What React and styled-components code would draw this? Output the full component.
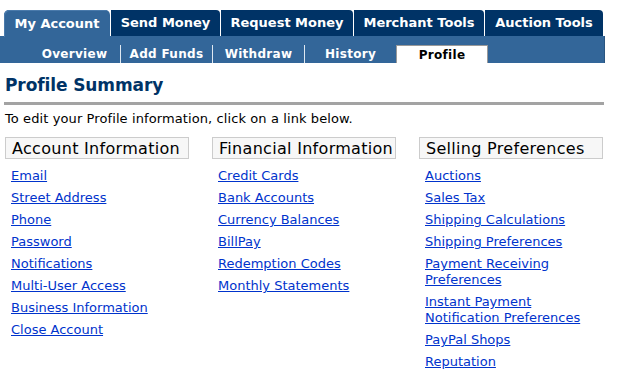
import styled, { createGlobalStyle } from "styled-components"

const GlobalStyle = createGlobalStyle`
  body {
    margin: 0;
    background: #fff;
    font-family: "DejaVu Sans", Verdana, sans-serif;
  }
`

const tabs = [
  { label: "My Account", width: 106, active: true },
  { label: "Send Money", width: 109 },
  { label: "Request Money", width: 132 },
  { label: "Merchant Tools", width: 130 },
  { label: "Auction Tools", width: 118 },
]

const subTabs = ["Overview", "Add Funds", "Withdraw", "History", "Profile"]

const columns = [
  {
    title: "Account Information",
    links: [
      "Email",
      "Street Address",
      "Phone",
      "Password",
      "Notifications",
      "Multi-User Access",
      "Business Information",
      "Close Account",
    ],
  },
  {
    title: "Financial Information",
    links: [
      "Credit Cards",
      "Bank Accounts",
      "Currency Balances",
      "BillPay",
      "Redemption Codes",
      "Monthly Statements",
    ],
  },
  {
    title: "Selling Preferences",
    links: [
      "Auctions",
      "Sales Tax",
      "Shipping Calculations",
      "Shipping Preferences",
      "Payment Receiving Preferences",
      "Instant Payment Notification Preferences",
      "PayPal Shops",
      "Reputation",
    ],
  },
]

export default function App() {
  return (
    <Page>
      <GlobalStyle />
      <Nav>
        <TabRow>
          {tabs.map(t => (
            <Tab key={t.label} $active={t.active} $width={t.width}>{t.label}</Tab>
          ))}
        </TabRow>
        <SubBar>
          {subTabs.map(s => (
            <SubTab key={s} $active={s === "Profile"}>{s}</SubTab>
          ))}
        </SubBar>
      </Nav>

      <Content>
        <Title>Profile Summary</Title>
        <Rule />
        <Intro>To edit your Profile information, click on a link below.</Intro>
        <Columns>
          {columns.map(col => (
            <Column key={col.title}>
              <ColumnHead>{col.title}</ColumnHead>
              <LinkList>
                {col.links.map(l => (
                  <li key={l}><a href="#">{l}</a></li>
                ))}
              </LinkList>
            </Column>
          ))}
        </Columns>
      </Content>
    </Page>
  )
}

const Page = styled.div`
  width: 617px;
  height: 382px;
  overflow: hidden;
`

const Nav = styled.div`
  padding: 10px 0 0 4px;
  width: 601px;
`

const TabRow = styled.div`
  display: flex;
  gap: 1px;
  height: 26px;
`

const Tab = styled.div`
  width: ${p => p.$width}px;
  flex: none;
  box-sizing: border-box;
  background: ${p => (p.$active ? "#336699" : "#003366")};
  border-radius: ${p => (p.$active ? "5px 5px 0 0" : "0 4px 0 0")};
  color: #fff;
  font-size: 13px;
  font-weight: bold;
  display: flex;
  align-items: center;
  justify-content: center;
  padding-bottom: 1px;
  height: ${p => (p.$active ? "27px" : "26px")};
  box-shadow: ${p => (p.$active ? "inset 1px 1px 0 #4a7aab" : "none")};
`

const SubBar = styled.div`
  background: #336699;
  height: 27px;
  margin-left: -4px;
  width: 605px;
  display: flex;
  align-items: flex-end;
  padding-left: 29px;
  box-sizing: border-box;
  border-right: 1px solid #2a5580;
`

const SubTab = styled.div`
  width: 92px;
  height: 18px;
  box-sizing: border-box;
  display: flex;
  align-items: center;
  justify-content: center;
  font-size: 12px;
  font-weight: bold;
  letter-spacing: 0.3px;
  color: ${p => (p.$active ? "#000" : "#fff")};
  background: ${p => (p.$active ? "#fff" : "transparent")};
  border: ${p => (p.$active ? "1px solid #999" : "none")};
  border-bottom: none;
  border-right: ${p => (p.$active ? "1px solid #999" : "1px solid #dfe8f1")};
  margin-left: ${p => (p.$active ? "-1px" : "0")};
`

const Content = styled.div`
  padding: 0 13px 0 5px;
`

const Title = styled.h1`
  margin: 11px 0 0;
  font-size: 17px;
  line-height: 22px;
  letter-spacing: -0.1px;
  font-weight: bold;
  color: #003366;
`

const Rule = styled.div`
  height: 3px;
  background: #a3a3a3;
  margin: 6px 0 0 -1px;
  width: 600px;
`

const Intro = styled.p`
  margin: 6px 0 0;
  font-size: 13px;
  line-height: 16px;
  letter-spacing: 0.1px;
  color: #000;
`

const Columns = styled.div`
  display: grid;
  grid-template-columns: repeat(3, 184px);
  column-gap: 23px;
  margin-top: 10px;
`

const Column = styled.div`
  display: flex;
  flex-direction: column;
`

const ColumnHead = styled.div`
  height: 22px;
  box-sizing: border-box;
  border: 1px solid #cccccc;
  background: #f7f7f7;
  font-size: 16px;
  line-height: 21px;
  letter-spacing: 0.3px;
  padding-left: 6px;
  color: #000;
  white-space: nowrap;
`

const LinkList = styled.ul`
  list-style: none;
  margin: 9px 0 0;
  padding: 0 0 0 6px;
  display: flex;
  flex-direction: column;
  gap: 6px;
  font-size: 13px;
  line-height: 16px;

  a {
    color: #0033cc;
    text-decoration: underline;
  }
`
